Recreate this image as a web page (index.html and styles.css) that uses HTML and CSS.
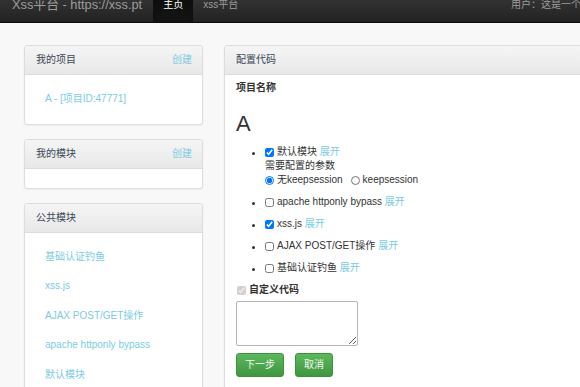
FILE: index.html
```html
<!DOCTYPE html>
<html lang="zh-CN">
<head>
	<meta charset="UTF-8">
	<title>Xss平台</title>
	<link rel="stylesheet" href="styles.css">
</head>
<body>
	<div class="navbar">
		<div class="navbar-inner">
			<a class="brand" href="#">Xss平台 - https://xss.pt</a>
			<ul class="nav">
				<li class="active"><a href="#">主页</a></li>
				<li><a href="#">xss平台</a></li>
			</ul>
			<p class="navbar-user">用户：这是一个测试账号</p>
		</div>
	</div>

	<div class="main">
		<div class="sidebar">
			<div class="panel">
				<div class="panel-heading">我的项目 <a href="#">创建</a></div>
				<div class="panel-body">
					<ul class="links">
						<li><a href="#">A - [项目ID:47771]</a></li>
					</ul>
				</div>
			</div>

			<div class="panel">
				<div class="panel-heading">我的模块 <a href="#">创建</a></div>
				<div class="panel-body"></div>
			</div>

			<div class="panel">
				<div class="panel-heading">公共模块</div>
				<div class="panel-body">
					<ul class="links">
						<li><a href="#">基础认证钓鱼</a></li>
						<li><a href="#">xss.js</a></li>
						<li><a href="#">AJAX POST/GET操作</a></li>
						<li><a href="#">apache httponly bypass</a></li>
						<li><a href="#">默认模块</a></li>
					</ul>
				</div>
			</div>
		</div>

		<div class="content">
			<div class="panel">
				<div class="panel-heading">配置代码</div>
				<div class="panel-body">
					<div class="field-label">项目名称</div>
					<h2>A</h2>

					<ul class="modules">
						<li>
							<label class="row"><input type="checkbox" checked>默认模块&nbsp;<a href="#">展开</a></label>
							<div class="row">需要配置的参数</div>
							<div class="row">
								<label class="radio"><input type="radio" name="keepsession" checked>无keepsession</label>
								<label class="radio"><input type="radio" name="keepsession">keepsession</label>
							</div>
						</li>
						<li><label class="row"><input type="checkbox">apache httponly bypass&nbsp;<a href="#">展开</a></label></li>
						<li><label class="row"><input type="checkbox" checked>xss.js&nbsp;<a href="#">展开</a></label></li>
						<li><label class="row"><input type="checkbox">AJAX POST/GET操作&nbsp;<a href="#">展开</a></label></li>
						<li><label class="row"><input type="checkbox">基础认证钓鱼&nbsp;<a href="#">展开</a></label></li>
					</ul>

					<label class="row custom"><input type="checkbox" checked disabled>自定义代码</label>
					<textarea class="code"></textarea>

					<div class="actions">
						<button class="btn">下一步</button>
						<button class="btn">取消</button>
					</div>
				</div>
			</div>
		</div>
	</div>
</body>
</html>
```

FILE: styles.css
```css
html,
body {
	margin: 0;
}
body {
	background: #f8f8f8;
	font-family: "Liberation Sans", "Noto Sans CJK SC", sans-serif;
	font-size: 10px;
	line-height: 14px;
	color: #333;
	overflow: hidden;
}
a {
	color: #7ccbe2;
	text-decoration: none;
}

/* 顶部导航 */
.navbar {
	height: 22px;
	overflow: hidden;
	border-bottom: 1px solid #0c0c0c;
}
.navbar-inner {
	display: flex;
	height: 35px;
	margin-top: -13px;
	line-height: 35px;
	background: linear-gradient(#3c3c3c, #222);
}
.brand {
	margin-left: 12px;
	font-size: 12.8px;
	color: #9d9d9d;
}
.nav {
	display: flex;
	margin: 0 0 0 11px;
	padding: 0;
	list-style: none;
}
.nav a {
	display: block;
	padding: 0 10px;
	color: #9d9d9d;
}
.nav .active a {
	color: #fff;
	background: linear-gradient(#0b0b0b, #151515);
	box-shadow: inset 0 3px 9px rgba(0,0,0,.25);
}
.navbar-user {
	flex-shrink: 0;
	width: 69px;
	margin: 0 0 0 auto;
	white-space: nowrap;
	color: #9d9d9d;
}

/* 主体 */
.main {
	display: flex;
	gap: 21px;
	width: 900px;
	padding: 22px 0 0 24px;
}
.sidebar {
	display: flex;
	flex-direction: column;
	gap: 14px;
	flex-shrink: 0;
	width: 179px;
}
.content {
	flex: 1;
}

.panel {
	background: #fff;
	border: 1px solid #ddd;
	border-radius: 3px;
	box-shadow: 0 1px 2px rgba(0,0,0,.05);
}
.panel-heading {
	display: flex;
	justify-content: space-between;
	padding: 7px 10px 7px 11px;
	border-bottom: 1px solid #ddd;
	border-radius: 3px 3px 0 0;
	background: linear-gradient(#f5f5f5, #e8e8e8);
	color: #3a4756;
}
.sidebar .panel-body {
	padding: 9.5px 0;
}
.links {
	margin: 0;
	padding: 0;
	list-style: none;
}
.links a {
	display: block;
	padding: 7.5px 20px;
	line-height: 14.5px;
}

/* 配置代码 */
.content .panel-body {
	padding: 6px 11px 20px;
}
.field-label {
	font-weight: bold;
	margin-bottom: 3px;
}
h2 {
	margin: 17px 0 9px;
	font-size: 22px;
	font-weight: normal;
	line-height: 24px;
}
.modules {
	margin: 0;
	padding-left: 29px;
}
.modules li {
	margin-bottom: 8px;
}
.row {
	display: flex;
	align-items: center;
	height: 14px;
}
.row input {
	width: 9px;
	height: 9px;
	margin: 0 3px 0 0;
}
.radio {
	display: flex;
	align-items: center;
	margin-right: 8px;
}
.custom {
	margin-left: 1px;
	font-weight: bold;
}
.code {
	display: block;
	box-sizing: border-box;
	width: 122px;
	height: 45px;
	margin-top: 4px;
	border: 1px solid #b5b5b5;
	border-radius: 2px;
}
.actions {
	display: flex;
	gap: 11px;
	margin-top: 7px;
}
.btn {
	height: 24px;
	padding: 0 8px;
	border: 1px solid #3e8f3e;
	border-radius: 3px;
	background: linear-gradient(#5cb85c, #419641);
	color: #f2f9f2;
	font: inherit;
	cursor: pointer;
}
```
